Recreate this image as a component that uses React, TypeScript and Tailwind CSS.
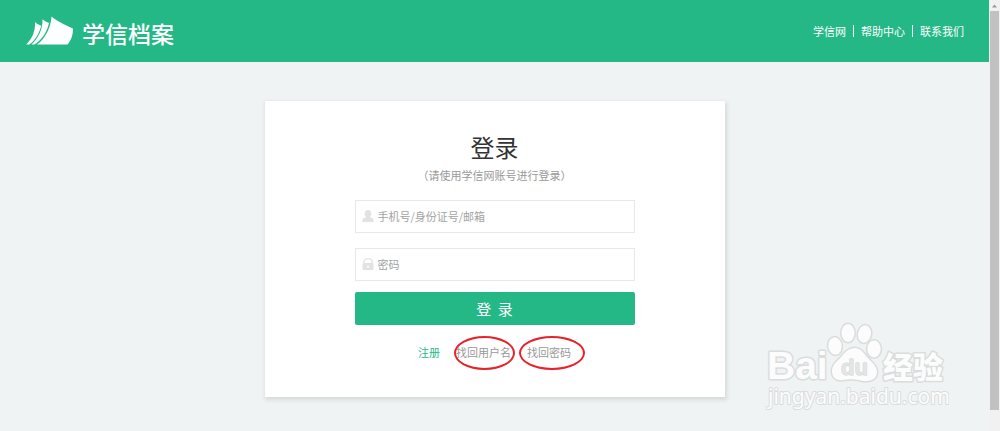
import React from "react";

const navLinks = ["学信网", "帮助中心", "联系我们"];

function Logo() {
  return (
    <a href="#" className="flex items-center gap-2 text-white">
      <svg viewBox="0 0 48 30" className="h-[30px] w-12" fill="currentColor" aria-hidden="true">
        <path d="M25.500 0.500C30 4.500 38 8.500 46.900 12.500C47.200 19 45 24.500 41.500 28.600H11C20 22 24.800 11 25.500 0.500Z" />
        <path d="M16.500 3.200C18.500 5 20.800 6.200 23 7C21 16 16 24 8.300 28.600H5.500C12.500 22 16.800 13 16.500 3.200Z" />
        <path d="M9 6C10.800 7.800 13 9 15.200 9.800C13.300 17.500 8.800 25 3.300 28.600H0.300C6.500 22 9.500 15 9 6Z" />
      </svg>
      <span className="pt-1 text-[23px] leading-8 font-medium">学信档案</span>
    </a>
  );
}

function UserIcon() {
  return (
    <svg viewBox="0 0 12 12" className="size-3 shrink-0 fill-[#e2e2e2]" aria-hidden="true">
      <path d="M6 0C3.900 0 2.700 1.500 2.700 3.400C2.700 4.900 3.300 6.200 4.200 6.900V7.300C2 7.800 0.200 8.600 0.200 12H11.800C11.800 8.600 10 7.800 7.800 7.300V6.900C8.700 6.200 9.300 4.900 9.300 3.400C9.300 1.500 8.100 0 6 0Z" />
    </svg>
  );
}

function LockIcon() {
  return (
    <svg viewBox="0 0 12 12" className="size-3 shrink-0" aria-hidden="true">
      <path d="M1.800 6V3.800C1.800 1.900 3.500 0.800 6 0.800S10.200 1.900 10.200 3.800V6" fill="none" stroke="#e6e6e6" strokeWidth="1.500" />
      <rect x="0.500" y="5" width="11" height="7" rx="1" fill="#e2e2e2" />
      <path d="M5.300 7.200H6.700V10H5.300Z" fill="#fff" />
    </svg>
  );
}

function Field({ label, type, icon }: { label: string; type: string; icon: React.ReactNode }) {
  return (
    <label className="flex h-[33px] items-center gap-1 border border-[#e8e8e8] px-1.5 pb-px">
      {icon}
      <input
        type={type}
        aria-label={label}
        placeholder={label}
        className="min-w-0 flex-1 bg-transparent text-[11px] leading-4 text-[#666] outline-none placeholder:text-[#a3a3a3]"
      />
    </label>
  );
}

function CircledLink({ children, ring }: { children: React.ReactNode; ring: string }) {
  return (
    <a href="#" className="relative text-[#999]">
      {children}
      <span className={`pointer-events-none absolute rounded-[50%] border-2 border-[#e8222b] ${ring}`} />
    </a>
  );
}

function Watermark() {
  return (
    <svg
      viewBox="0 0 184 92"
      className="pointer-events-none absolute right-10 bottom-[17px] h-[92px] w-[184px] fill-[#fcfcfc] stroke-[#d9dddc]"
      strokeWidth="3"
      strokeLinejoin="round"
      paintOrder="stroke"
      fontFamily="'Liberation Sans', 'Noto Sans CJK SC', sans-serif"
    >
      <text x="2" y="57" fontSize="39" fontWeight="700">Bai</text>
      <g>
        <ellipse cx="70" cy="24" rx="6.700" ry="8.700" transform="rotate(-8 70 24)" />
        <ellipse cx="83" cy="11" rx="6.500" ry="9" />
        <ellipse cx="99.500" cy="12" rx="6.500" ry="8.700" transform="rotate(12 99.500 12)" />
        <ellipse cx="109" cy="27" rx="6.700" ry="8.500" />
        <path d="M90 26C84 26 80 30 77 34C73 39 67 42 67 49C67 56 72 59 78 58C84 57 88 57 94 58C100 60 112 60 112 50C112 43 105 39 101 34C98 30 95 26 90 26Z" />
      </g>
      <text x="76" y="53" fontSize="22" fontWeight="700" fill="#e3e6e5" stroke="#cfd3d2" strokeWidth="1">du</text>
      <text x="118" y="56" fontSize="30" fontWeight="900" fontFamily="'Noto Sans CJK SC', sans-serif">经验</text>
      <text x="3" y="82" fontSize="21" strokeWidth="2" fontFamily="'Noto Sans', sans-serif">jingyan.baidu.com</text>
    </svg>
  );
}

export default function App() {
  return (
    <div className="flex min-h-screen bg-[#eff3f3] font-['Noto_Sans_CJK_SC',sans-serif] text-[11px] leading-4">
      <div className="relative flex min-w-0 flex-1 flex-col">
        <header className="flex h-[62px] items-center justify-between bg-[#25b887] pr-[25px] pl-[26px]">
          <Logo />
          <nav className="flex items-center text-white">
            {navLinks.map((item, index) => (
              <React.Fragment key={item}>
                {index > 0 && <span className="mx-[7px] h-3 w-px bg-white" />}
                <a href="#">{item}</a>
              </React.Fragment>
            ))}
          </nav>
        </header>

        <main className="px-4 pt-[39px] pb-8">
          <form
            className="mx-auto w-full max-w-[460px] bg-white px-[90px] pt-[30px] pb-[37px] shadow-[1px_2px_4px_1px_#d5dad9]"
            onSubmit={(event) => event.preventDefault()}
          >
            <h1 className="text-center text-2xl leading-8 text-[#333]">登录</h1>
            <p className="mt-1 text-center text-[#999]">（请使用学信网账号进行登录）</p>
            <div className="mt-[17px] flex flex-col gap-[15px]">
              <Field label="手机号/身份证号/邮箱" type="text" icon={<UserIcon />} />
              <Field label="密码" type="password" icon={<LockIcon />} />
            </div>
            <button type="submit" className="mt-[11px] h-[33px] w-full rounded-xs bg-[#25b887] text-[15px] text-white">
              登&nbsp;&nbsp;录
            </button>
            <div className="mt-[19px] flex justify-center gap-4">
              <a href="#" className="text-[#25b887]">注册</a>
              <CircledLink ring="-left-0.5 -right-1 -top-2 -bottom-2.5">找回用户名</CircledLink>
              <CircledLink ring="-left-2 -right-3.5 -top-2 -bottom-2.5">找回密码</CircledLink>
            </div>
          </form>
        </main>
        <Watermark />
      </div>

      <div className="flex w-[11px] shrink-0 flex-col bg-[#f1f1f1] px-px pb-[21px]" aria-hidden="true">
        <svg viewBox="0 0 9 11" className="h-[11px] w-[9px] fill-[#999]">
          <path d="M2 7.500L4.500 4.500L7 7.500Z" />
        </svg>
        <div className="flex-1 bg-[#c1c1c1]" />
      </div>
    </div>
  );
}
